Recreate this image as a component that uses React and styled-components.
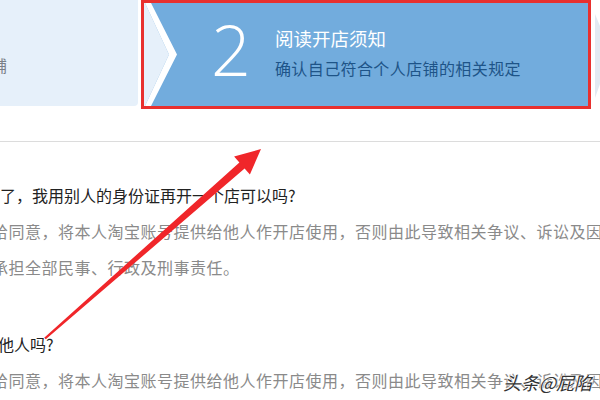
import React from 'react';
import styled, { createGlobalStyle } from 'styled-components';

const GlobalStyle = createGlobalStyle`
  html, body {
    margin: 0;
    padding: 0;
    background: #fff;
  }
  body {
    font-family: "Noto Sans CJK SC", "Noto Sans", sans-serif;
  }
`;

const Page = styled.div`
  position: relative;
  width: 600px;
  height: 400px;
  overflow: hidden;
  background: #fff;
`;

const StepBar = styled.div`
  display: flex;
  height: 109px;
`;

const DoneStep = styled.div`
  width: 138px;
  height: 106px;
  margin-right: 3px;
  background: #e6f0fa;
  border-bottom-right-radius: 4px;
  overflow: hidden;
  padding-top: 54px;
  box-sizing: border-box;
`;

const DoneText = styled.div`
  font-size: 16px;
  line-height: 22px;
  color: #7a7f86;
  text-indent: -9px;
  white-space: nowrap;
`;

const ActiveStep = styled.div`
  box-sizing: border-box;
  width: 450px;
  height: 109px;
  border: 3px solid #e8302e;
  background: #72acdd;
  display: flex;
  align-items: center;
`;

const Notch = styled.svg`
  flex: none;
  width: 33px;
  height: 103px;
  display: block;
`;

const StepNumber = styled.div`
  margin-left: 34px;
  font-family: "Open Sans", "Liberation Sans", sans-serif;
  font-weight: 300;
  font-size: 70px;
  line-height: 70px;
  color: #fff;
  margin-top: -12px;
`;

const StepText = styled.div`
  margin-left: 24px;
  margin-top: -4px;
  display: flex;
  flex-direction: column;
`;

const StepTitle = styled.div`
  font-size: 18.5px;
  line-height: 24px;
  color: #fff;
`;

const StepDesc = styled.div`
  margin-top: 7px;
  font-size: 16px;
  letter-spacing: 0.4px;
  line-height: 22px;
  color: #1e5488;
`;

const NextStub = styled.svg`
  flex: none;
  width: 9px;
  height: 109px;
  display: block;
`;

const Divider = styled.div`
  margin-top: 32px;
  height: 1px;
  background: #dcdcdc;
`;

const Faq = styled.div`
  margin-top: ${(p) => p.$top}px;
`;

const Question = styled.div`
  font-size: 16px;
  line-height: 36px;
  color: #222;
  white-space: nowrap;
  text-indent: ${(p) => p.$indent || 0}px;
`;

const Answer = styled.div`
  font-size: 16px;
  letter-spacing: 0.5px;
  line-height: 36px;
  color: #8a8a8a;
  white-space: nowrap;
  text-indent: ${(p) => p.$indent || 0}px;
`;

const Overlay = styled.svg`
  position: absolute;
  left: 0;
  top: 0;
  width: 600px;
  height: 400px;
  pointer-events: none;
`;

const Watermark = styled.div`
  position: absolute;
  right: 8px;
  bottom: 5px;
  font-size: 18px;
  font-style: italic;
  color: #333;
  text-shadow: 0 0 2px #fff, 0 0 2px #fff, 0 0 1px #fff;
  white-space: nowrap;
`;

const answerText =
  '给同意，将本人淘宝账号提供给他人作开店使用，否则由此导致相关争议、诉讼及因此产生的';

export default function App() {
  return (
    <Page>
      <GlobalStyle />
      <StepBar>
        <DoneStep>
          <DoneText>铺</DoneText>
        </DoneStep>
        <ActiveStep>
          <Notch viewBox="0 0 33 103" preserveAspectRatio="none">
            <polygon points="0,0 1,0 25,51.5 1,103 0,103" fill="#e6f0fa" />
            <polygon points="1,0 7,0 33,51.5 7,103 1,103 25,51.5" fill="#fff" />
          </Notch>
          <StepNumber>2</StepNumber>
          <StepText>
            <StepTitle>阅读开店须知</StepTitle>
            <StepDesc>确认自己符合个人店铺的相关规定</StepDesc>
          </StepText>
        </ActiveStep>
        <NextStub viewBox="0 0 9 109" preserveAspectRatio="none">
          <polygon points="0,0 9,0 9,109 0,109" fill="#fff" />
          <polygon points="4,14 9,26 9,84 4,98" fill="#e3eaf2" />
        </NextStub>
      </StepBar>
      <Divider />
      <Faq $top={35}>
        <Question>了，我用别人的身份证再开一个店可以吗?</Question>
        <Answer $indent={-8}>{answerText}</Answer>
        <Answer $indent={-8}>承担全部民事、行政及刑事责任。</Answer>
      </Faq>
      <Faq $top={41}>
        <Question $indent={-2}>他人吗?</Question>
        <Answer $indent={-8}>{answerText}</Answer>
      </Faq>
      <Overlay viewBox="0 0 600 400">
        <polygon
          points="261,149 249.9,174.5 244.6,168.5 45.8,339.3 44.2,337.7 239.4,162.5 234.1,156.5"
          fill="#f0262a"
        />
      </Overlay>
      <Watermark>头条@屁陷</Watermark>
    </Page>
  );
}
